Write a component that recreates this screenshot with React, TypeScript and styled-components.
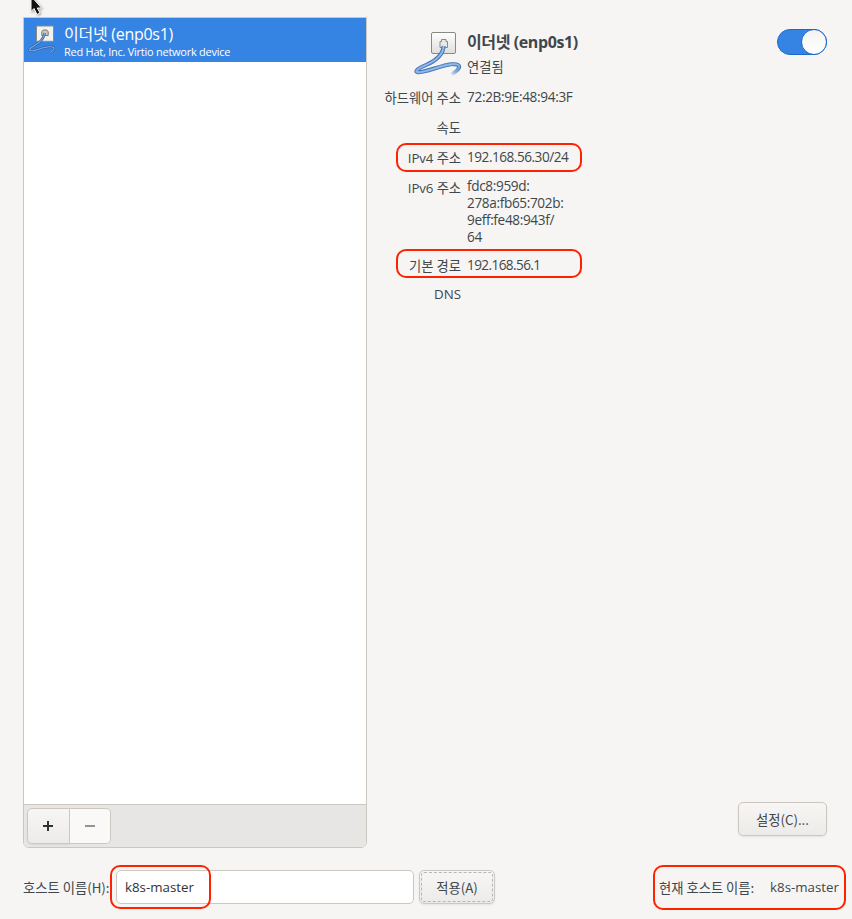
import React from "react";
import styled, { createGlobalStyle } from "styled-components";

const latin = `"Open Sans", "Noto Sans CJK KR", sans-serif`;
const korean = `"Noto Sans CJK KR", sans-serif`;

const GlobalStyle = createGlobalStyle`
  * { box-sizing: border-box; }
  body { margin: 0; background: #f6f5f4; }
`;

const Text = styled.span<{ $size?: number; $track?: number; $korean?: boolean; $bold?: boolean; $line?: number }>`
  display: block;
  white-space: nowrap;
  font-family: ${(p) => (p.$korean ? korean : latin)};
  font-size: ${(p) => p.$size ?? 13.3}px;
  line-height: ${(p) => p.$line ?? 17}px;
  letter-spacing: ${(p) => p.$track ?? 0}px;
  font-weight: ${(p) => (p.$bold ? 700 : 400)};
`;

const Value = styled(Text)`
  margin-top: -1px;
  font-size: 13.6px;
`;

const Page = styled.div`
  position: relative;
  width: 852px;
  height: 919px;
  padding: 17px 0 0 23px;
  color: #40474a;
  background: #f6f5f4;
  overflow: hidden;
`;

const Pointer = styled.svg`
  position: absolute;
  left: 29px;
  top: -4px;
  filter: drop-shadow(1px 1px 1px rgba(0, 0, 0, 0.35));
`;

const Main = styled.main`
  display: flex;
  height: 831px;
`;

const DevicePanel = styled.section`
  display: flex;
  flex-direction: column;
  width: 344px;
  background: #fff;
  border: 1px solid #cdc7c2;
  border-radius: 0 0 6px 6px;
  overflow: hidden;
`;

const DeviceRow = styled.div`
  display: flex;
  height: 44px;
  padding: 6px 0 0 4px;
  gap: 8px;
  color: #fff;
  background: #3584e4;
`;

const DeviceNames = styled.div`
  display: flex;
  flex-direction: column;
`;

const PanelToolbar = styled.div`
  display: flex;
  height: 43px;
  margin-top: auto;
  padding: 3px;
  background: #e8e6e4;
  border-top: 1px solid #cdc7c2;
`;

const ToolButton = styled.button<{ $side: "left" | "right" }>`
  display: flex;
  align-items: center;
  justify-content: center;
  width: ${(p) => (p.$side === "left" ? 43 : 41)}px;
  height: 36px;
  padding: 0;
  border: 1px solid #cdc7c2;
  border-left-width: ${(p) => (p.$side === "left" ? 1 : 0)}px;
  border-radius: ${(p) => (p.$side === "left" ? "5px 0 0 5px" : "0 5px 5px 0")};
  background: ${(p) => (p.$side === "left" ? "linear-gradient(#f7f6f5, #edebe9)" : "#faf9f8")};
  box-shadow: ${(p) => (p.$side === "left" ? "0 1px 2px rgba(0,0,0,.07)" : "none")};
`;

const Details = styled.section`
  display: flex;
  flex-direction: column;
  flex: 1;
  padding: 11px 25px 12px 18px;
`;

const DetailsHeader = styled.header`
  display: flex;
  height: 55px;
`;

const HeaderIcon = styled.div`
  width: 82px;
  padding: 1px 0 0 28px;
`;

const HeaderNames = styled.div`
  display: flex;
  flex-direction: column;
  padding-top: 2px;
`;

const Switch = styled.div`
  display: flex;
  justify-content: flex-end;
  width: 50px;
  height: 26px;
  margin: 1px 0 0 auto;
  border: 1px solid #1b6acb;
  border-radius: 13px;
  background: #3584e4;
`;

const Knob = styled.div`
  width: 26px;
  height: 26px;
  margin: -1px;
  border: 1px solid #1b6acb;
  border-radius: 50%;
  background: linear-gradient(#f4f3f2, #fff);
`;

const Field = styled.div<{ $height: number; $pad?: number }>`
  position: relative;
  display: grid;
  grid-template-columns: 76px auto;
  column-gap: 6px;
  align-items: start;
  height: ${(p) => p.$height}px;
  padding-top: ${(p) => p.$pad ?? 6}px;
`;

const FieldLabel = styled.div<{ $drop?: number }>`
  display: flex;
  justify-content: flex-end;
  padding-top: ${(p) => p.$drop ?? 0}px;
`;

const Outline = styled.div<{ $x: number; $y: number; $w: number; $h: number }>`
  position: absolute;
  left: ${(p) => p.$x}px;
  top: ${(p) => p.$y}px;
  width: ${(p) => p.$w}px;
  height: ${(p) => p.$h}px;
  border: 2px solid #ff2200;
  border-radius: 10px;
  pointer-events: none;
`;

const PushButton = styled.button<{ $width: number; $focused?: boolean }>`
  display: flex;
  align-items: center;
  justify-content: center;
  width: ${(p) => p.$width}px;
  height: 34px;
  padding: 0;
  color: inherit;
  border: 1px solid #cdc7c2;
  border-radius: 5px;
  background: linear-gradient(#f7f6f5, #edebe9);
  box-shadow: 0 1px 2px rgba(0, 0, 0, 0.08);
  outline: ${(p) => (p.$focused ? "1px dashed #b4b7b7" : "none")};
  outline-offset: -3px;
`;

const Actions = styled.div`
  display: flex;
  justify-content: flex-end;
  margin-top: auto;
`;

const Footer = styled.footer`
  display: flex;
  align-items: center;
  height: 34px;
  margin-top: 22px;
`;

const HostLabel = styled.div`
  width: 93px;
`;

const HostEntry = styled.div`
  position: relative;
  display: flex;
  align-items: center;
  width: 298px;
  height: 34px;
  margin-right: 5px;
  padding-left: 8px;
  color: #2e3436;
  border: 1px solid #cdc7c2;
  border-radius: 5px;
  background: #fff;
`;

const CurrentHost = styled.div`
  position: relative;
  display: flex;
  align-items: center;
  justify-content: space-between;
  width: 180px;
  margin: 0 13px 0 auto;
`;

function EthernetIcon({ small }: { small?: boolean }) {
  if (small) {
    const cord = "M16.8 9C15.5 16 10 20 5 22.5C1.5 24.5 .5 26.5 2.5 26.8C6 27.3 15 23 21.5 22.8C27 22.6 27.5 25 22.5 28.2";
    return (
      <svg width="28" height="30" viewBox="0 0 28 30" fill="none">
        <rect x="8.5" y="2" width="17" height="15.3" rx="0.8" fill="#f2f2ef" stroke="#888a85" />
        <path d="M13.8 11.5V7.8L15.2 6H18.8L20.2 7.8V11.5Z" fill="#c9cac5" stroke="#777973" />
        <path d={cord} stroke="#2f63a8" strokeWidth="2.4" />
        <path d={cord} stroke="#7eabe0" strokeWidth="1.1" />
      </svg>
    );
  }
  const cable = "M30.7 17C30 27 21 32.5 13 36C5 39.5 1.5 42.3 4.4 43.1C9 44.6 28 36.5 38 35.3C48 34.3 49.5 38.5 38.5 45.5";
  return (
    <svg width="50" height="48" viewBox="0 0 50 48" fill="none">
      <defs>
        <linearGradient id="plate" x1="0" y1="0" x2="0" y2="1">
          <stop stopColor="#fff" />
          <stop offset="1" stopColor="#dededb" />
        </linearGradient>
        <linearGradient id="cableEdge" gradientUnits="userSpaceOnUse" x1="46" y1="38" x2="39" y2="46">
          <stop stopColor="#3465a4" />
          <stop offset="1" stopColor="#3465a4" stopOpacity="0" />
        </linearGradient>
        <linearGradient id="cableCore" gradientUnits="userSpaceOnUse" x1="46" y1="38" x2="39" y2="46">
          <stop stopColor="#78a7e0" />
          <stop offset="1" stopColor="#78a7e0" stopOpacity="0.2" />
        </linearGradient>
        <clipPath id="cableBody"><path d="M0 0H50V37H38L30 48H0Z" /></clipPath>
        <clipPath id="cableEnd"><path d="M50 37H38L30 48H50Z" /></clipPath>
      </defs>
      <rect x="18.5" y="3.5" width="24" height="21" rx="1.5" fill="url(#plate)" stroke="#888a85" />
      <path d="M27 18.5V12.5H28.5V10.5H33V12.5H34.5V18.5Z" fill="#e8e8e6" stroke="#888a85" />
      <g clipPath="url(#cableBody)">
        <path d={cable} stroke="#4272b4" strokeWidth="4" />
        <path d={cable} stroke="#78a7e0" strokeWidth="2.4" />
        <path d={cable} stroke="#a4c6ef" strokeWidth="0.8" />
      </g>
      <g clipPath="url(#cableEnd)">
        <path d={cable} stroke="url(#cableEdge)" strokeWidth="4" />
        <path d={cable} stroke="url(#cableCore)" strokeWidth="2.4" />
      </g>
    </svg>
  );
}

export default function App() {
  return (
    <>
      <GlobalStyle />
      <Page>
        <Pointer width="14" height="20" viewBox="0 0 14 20">
          <path d="M2 0V15.5L5 12.5L8 18.5L11 17L8.3 12H12.5Z" fill="#111" stroke="#fff" />
        </Pointer>
        <Main>
          <DevicePanel>
            <DeviceRow>
              <EthernetIcon small />
              <DeviceNames>
                <Text $size={16} $line={20} $track={-0.27}>이더넷 (enp0s1)</Text>
                <Text $size={11} $line={15} $track={-0.25}>Red Hat, Inc. Virtio network device</Text>
              </DeviceNames>
            </DeviceRow>
            <PanelToolbar>
              <ToolButton $side="left" aria-label="Add">
                <svg width="12" height="12"><path d="M5 1V11M0 6H10" stroke="#2e3436" strokeWidth="2" /></svg>
              </ToolButton>
              <ToolButton $side="right" aria-label="Remove">
                <svg width="12" height="12"><path d="M1 6H11" stroke="#929595" strokeWidth="2" /></svg>
              </ToolButton>
            </PanelToolbar>
          </DevicePanel>
          <Details>
            <DetailsHeader>
              <HeaderIcon><EthernetIcon /></HeaderIcon>
              <HeaderNames>
                <Text $size={16} $line={24} $track={-0.4} $bold>이더넷 (enp0s1)</Text>
                <Text $korean $line={25}>연결됨</Text>
              </HeaderNames>
              <Switch role="switch" aria-checked="true"><Knob /></Switch>
            </DetailsHeader>
            <Field $height={30}>
              <FieldLabel><Text $korean>하드웨어 주소</Text></FieldLabel>
              <Value $track={-0.33}>72:2B:9E:48:94:3F</Value>
            </Field>
            <Field $height={30}>
              <FieldLabel><Text $korean>속도</Text></FieldLabel>
            </Field>
            <Field $height={30}>
              <FieldLabel $drop={1}><Text $track={-0.1}>IPv4 주소</Text></FieldLabel>
              <Value $track={-0.48}>192.168.56.30/24</Value>
              <Outline $x={11} $y={0} $w={186} $h={29} />
            </Field>
            <Field $height={78} $pad={5}>
              <FieldLabel $drop={2}><Text $track={-0.1}>IPv6 주소</Text></FieldLabel>
              <Value $track={-0.35}>fdc8:959d:<br />278a:fb65:702b:<br />9eff:fe48:943f/<br />64</Value>
            </Field>
            <Field $height={29}>
              <FieldLabel><Text $korean>기본 경로</Text></FieldLabel>
              <Value $track={-0.6}>192.168.56.1</Value>
              <Outline $x={11} $y={-2} $w={186} $h={29} />
            </Field>
            <Field $height={29}>
              <FieldLabel><Text>DNS</Text></FieldLabel>
            </Field>
            <Actions>
              <PushButton $width={89}><Text $korean>설정(C)...</Text></PushButton>
            </Actions>
          </Details>
        </Main>
        <Footer>
          <HostLabel><Text $korean>호스트 이름(H):</Text></HostLabel>
          <HostEntry>
            <Text>k8s-master</Text>
            <Outline $x={-7} $y={-6} $w={101} $h={44} />
          </HostEntry>
          <PushButton $width={76} $focused><Text $korean>적용(A)</Text></PushButton>
          <CurrentHost>
            <Text $korean>현재 호스트 이름:</Text>
            <Text>k8s-master</Text>
            <Outline $x={-6} $y={-14} $w={193} $h={45} />
          </CurrentHost>
        </Footer>
      </Page>
    </>
  );
}
